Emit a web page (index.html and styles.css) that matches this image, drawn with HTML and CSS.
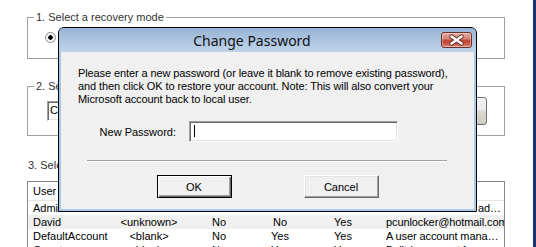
FILE: index.html
```html
<!DOCTYPE html>
<html lang="en">
<head>
  <meta charset="UTF-8">
  <title>PCUnlocker - Change Password</title>
  <link rel="stylesheet" href="styles.css">
</head>
<body>
  <div class="screen">
    <div class="app">
      <fieldset class="group mode-group">
        <legend>1. Select a recovery mode</legend>
        <div class="mode-row">
          <span class="radio checked"></span>
        </div>
      </fieldset>

      <fieldset class="group sam-group">
        <legend>2. Select the SAM registry file</legend>
        <div class="sam-row">
          <div class="combo">C:\Windows\System32\config\SAM</div>
          <button class="browse"></button>
        </div>
      </fieldset>

      <div class="section-label">3. Select a user account</div>

      <div class="listview">
        <div class="lv-row lv-head">
          <span class="name">User Name</span>
        </div>
        <div class="lv-row">
          <span class="name">Administrator</span>
          <span></span>
          <span></span>
          <span></span>
          <span></span>
          <span class="desc">Built-in account for administering the computer/domain</span>
        </div>
        <div class="lv-row hot">
          <span class="name">David</span>
          <span>&lt;unknown&gt;</span>
          <span>No</span>
          <span>No</span>
          <span>Yes</span>
          <span class="desc clip">pcunlocker@hotmail.com</span>
        </div>
        <div class="lv-row">
          <span class="name">DefaultAccount</span>
          <span>&lt;blank&gt;</span>
          <span>No</span>
          <span>Yes</span>
          <span>Yes</span>
          <span class="desc">A user account managed by the system.</span>
        </div>
        <div class="lv-row">
          <span class="name">Guest</span>
          <span>&lt;blank&gt;</span>
          <span>No</span>
          <span>Yes</span>
          <span>Yes</span>
          <span class="desc">Built-in account for guest access to the computer/domain</span>
        </div>
      </div>
    </div>
    <div class="edge"></div>
  </div>

  <!-- modal dialog on top of the main window -->
  <div class="dialog">
    <div class="titlebar">
      <span class="title">Change Password</span>
      <span class="close">
        <svg width="31" height="16" viewBox="0 0 31 16">
          <path d="M10.5 4.5 L20.5 11.5 M20.5 4.5 L10.5 11.5" stroke="#5a2a24" stroke-width="4.4" stroke-linecap="round"/>
          <path d="M10.5 4.5 L20.5 11.5 M20.5 4.5 L10.5 11.5" stroke="#ffffff" stroke-width="2.6" stroke-linecap="round"/>
        </svg>
      </span>
    </div>
    <div class="client">
      <p class="message">Please enter a new password (or leave it blank to remove existing password),<br>and then click OK to restore your account. Note: This will also convert your<br>Microsoft account back to local user.</p>
      <div class="field">
        <label class="field-label">New Password:</label>
        <div class="input"><span class="caret"></span></div>
      </div>
      <div class="sep"></div>
      <div class="buttons">
        <button class="btn default">OK</button>
        <button class="btn">Cancel</button>
      </div>
    </div>
  </div>
</body>
</html>
```

FILE: styles.css
```css
* {
  box-sizing: border-box;
}

html, body {
  margin: 0;
  overflow: hidden;
}

body {
  position: relative;
  width: 536px;
  height: 247px;
  background-color: #ffffff;
  color: #000;
  font-family: "Liberation Sans", Arial, sans-serif;
  font-size: 11px;
}

.screen {
  display: flex;
  height: 247px;
  overflow: hidden;
}

.app {
  flex: 1;
  padding: 10px 0 0 27px;
  overflow: hidden;
}

.edge {
  width: 3px;
  background-color: #1c3575;
}

/* group boxes */
.group {
  width: 478px;
  min-width: 0;
  margin: 0;
  padding: 0 0 0 6px;
  border: 1px solid #a0a0a0;
}

.group legend {
  padding: 0 2px;
  line-height: 14px;
  color: #333;
}

.mode-row {
  display: flex;
  align-items: center;
  height: 10px;
  margin: 8px 0 16px 11px;
}

.radio {
  width: 11px;
  height: 11px;
  border: 1px solid #8e8f8f;
  border-radius: 50%;
  background: radial-gradient(circle, #000 0 2px, #f4f4f4 2.5px);
}

.sam-group {
  margin-top: 20px;
}

.sam-row {
  display: flex;
  align-items: center;
  gap: 9px;
  width: 440px;
  height: 28px;
  margin: 4px 0 10px 13px;
}

.combo {
  flex: 1;
  height: 20px;
  padding-left: 2px;
  line-height: 16px;
  border: 1px solid;
  border-color: #a0a0a0 #fff #fff #a0a0a0;
  box-shadow: inset 1px 1px #696969, inset -1px -1px #e3e3e3;
  white-space: nowrap;
  overflow: hidden;
}

.browse {
  width: 76px;
  height: 28px;
  font: inherit;
  border: 1px solid #707070;
  border-radius: 3px;
  background: linear-gradient(#f2f2f2, #ebebeb 45%, #dcdad0 50%, #cfcdc2);
}

.section-label {
  margin-top: 22px;
  padding-left: 1px;
  line-height: 14px;
  color: #333;
}

/* user list */
.listview {
  width: 478px;
  height: 70px;
  margin-top: 9px;
  border: 1px solid #828790;
  overflow: hidden;
}

.lv-row {
  display: grid;
  grid-template-columns: 82px 78px 62px 60px 66px 1fr;
  height: 14px;
  line-height: 14px;
  white-space: nowrap;
}

.lv-row span {
  overflow: hidden;
  text-align: center;
}

.lv-row .name {
  padding-left: 5px;
  text-align: left;
}

.lv-row .desc {
  padding-left: 10px;
  text-align: left;
  text-overflow: ellipsis;
  letter-spacing: -0.1px;
}

.lv-row .desc.clip {
  text-overflow: clip;
}

.lv-head {
  height: 19px;
  line-height: 18px;
  border-bottom: 1px solid #e5e5e5;
}

.lv-row.hot {
  background-color: #f0f0f0;
}

/* dialog */
.dialog {
  position: absolute;
  left: 58px;
  top: 27px;
  width: 419px;
  height: 185px;
  display: flex;
  flex-direction: column;
  border: 1px solid #000;
  border-radius: 6px 6px 0 0;
  background-color: #a9c9ea;
}

.titlebar {
  display: flex;
  align-items: center;
  height: 24px;
  padding-right: 4px;
  border-radius: 5px 5px 0 0;
  background: linear-gradient(#98b4d5, #bfd4ea);
}

.title {
  flex: 1;
  padding: 1px 0 0 4px;
  text-align: center;
  font-family: "Noto Sans", "Liberation Sans", sans-serif;
  font-size: 14px;
  color: #111;
}

.close {
  display: flex;
  width: 31px;
  height: 16px;
  border: 1px solid #6e3029;
  border-radius: 3px;
  background: linear-gradient(#e4aca2, #d38476 40%, #c0432f 55%, #c95a48 80%, #dc9788);
  box-shadow: inset 0 0 0 1px rgba(255, 255, 255, 0.35);
  overflow: hidden;
}

.close svg {
  margin: -1px;
}

.client {
  flex: 1;
  margin: 0 2px 2px;
  background-color: #f0f0f0;
}

.message {
  margin: 0;
  padding: 15px 0 0 17px;
  line-height: 13px;
  letter-spacing: -0.1px;
}

.field {
  display: flex;
  align-items: center;
  margin-top: 15px;
}

.field-label {
  width: 115px;
  text-align: right;
}

.input {
  display: flex;
  width: 209px;
  height: 21px;
  margin-left: 13px;
  padding: 3px 0 0 4px;
  background-color: #fff;
  border: 1px solid;
  border-color: #a0a0a0 #fff #fff #a0a0a0;
  box-shadow: inset 1px 1px #696969, inset -1px -1px #e3e3e3;
}

.caret {
  width: 1px;
  height: 12px;
  background-color: #000;
}

.sep {
  width: 360px;
  height: 2px;
  margin: 18px 0 0 26px;
  border-top: 1px solid #a0a0a0;
  border-bottom: 1px solid #fff;
}

.buttons {
  display: flex;
  justify-content: center;
  gap: 72px;
  margin-top: 13px;
}

.btn {
  width: 75px;
  height: 23px;
  padding: 0;
  font: inherit;
  color: #000;
  background-color: #f0f0f0;
  border: 1px solid;
  border-color: #fff #696969 #696969 #fff;
  box-shadow: inset -1px -1px #a0a0a0, inset 1px 1px #e3e3e3;
}

.btn.default {
  border-color: #000;
  box-shadow: inset 1px 1px #fff, inset -1px -1px #696969, inset -2px -2px #a0a0a0;
}
```
